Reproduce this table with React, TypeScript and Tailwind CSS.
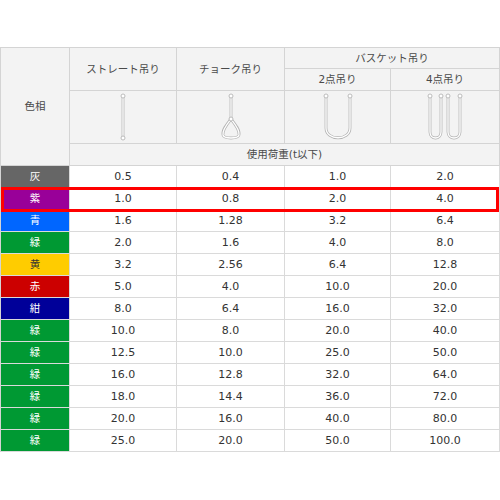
import React from "react";

type Row = { name: string; bg: string; fg: string; v: [string, string, string, string] };

const rows: Row[] = [
  { name: "灰", bg: "bg-[#666666]", fg: "text-white", v: ["0.5", "0.4", "1.0", "2.0"] },
  { name: "紫", bg: "bg-[#990099]", fg: "text-white", v: ["1.0", "0.8", "2.0", "4.0"] },
  { name: "青", bg: "bg-[#0066ff]", fg: "text-white", v: ["1.6", "1.28", "3.2", "6.4"] },
  { name: "緑", bg: "bg-[#009933]", fg: "text-white", v: ["2.0", "1.6", "4.0", "8.0"] },
  { name: "黄", bg: "bg-[#ffcc00]", fg: "text-[#333333]", v: ["3.2", "2.56", "6.4", "12.8"] },
  { name: "赤", bg: "bg-[#cc0000]", fg: "text-white", v: ["5.0", "4.0", "10.0", "20.0"] },
  { name: "紺", bg: "bg-[#000099]", fg: "text-white", v: ["8.0", "6.4", "16.0", "32.0"] },
  { name: "緑", bg: "bg-[#009933]", fg: "text-white", v: ["10.0", "8.0", "20.0", "40.0"] },
  { name: "緑", bg: "bg-[#009933]", fg: "text-white", v: ["12.5", "10.0", "25.0", "50.0"] },
  { name: "緑", bg: "bg-[#009933]", fg: "text-white", v: ["16.0", "12.8", "32.0", "64.0"] },
  { name: "緑", bg: "bg-[#009933]", fg: "text-white", v: ["18.0", "14.4", "36.0", "72.0"] },
  { name: "緑", bg: "bg-[#009933]", fg: "text-white", v: ["20.0", "16.0", "40.0", "80.0"] },
  { name: "緑", bg: "bg-[#009933]", fg: "text-white", v: ["25.0", "20.0", "50.0", "100.0"] },
];

// sling strap drawn as an outline: grey stroke with a white core
function Strap({ d }: { d: string }) {
  return (
    <>
      <path d={d} fill="none" stroke="#b4b4b4" strokeWidth={2.8} strokeLinecap="round" strokeLinejoin="round" />
      <path d={d} fill="none" stroke="#ffffff" strokeWidth={1.3} strokeLinecap="round" strokeLinejoin="round" />
    </>
  );
}

function Eye({ x, y }: { x: number; y: number }) {
  return <circle cx={x} cy={y} r={2} fill="#ffffff" stroke="#b4b4b4" strokeWidth={0.9} />;
}

function StraightIcon() {
  return (
    <svg width="12" height="50" viewBox="0 0 12 50">
      <Strap d="M6 5 L6 45" />
      <Eye x={6} y={4} />
      <Eye x={6} y={46} />
    </svg>
  );
}

function ChokeIcon() {
  return (
    <svg width="26" height="50" viewBox="0 0 26 50">
      <Strap d="M13 5 L13 27" />
      <Strap d="M13 27 C 9 32, 4 38, 5 43 C 6 47, 20 47, 21 43 C 22 38, 17 32, 13 27 Z" />
      <Eye x={13} y={4} />
      <Eye x={13} y={27} />
    </svg>
  );
}

function BasketIcon() {
  return (
    <svg width="30" height="50" viewBox="0 0 30 50">
      <Strap d="M3 5 L3 36 C 3 49, 27 49, 27 36 L27 5" />
      <Eye x={3} y={4} />
      <Eye x={27} y={4} />
    </svg>
  );
}

function FourPointIcon() {
  return (
    <svg width="36" height="50" viewBox="0 0 36 50">
      <Strap d="M3 5 L3 40 C 3 48, 14 48, 14 40 L14 5" />
      <Strap d="M21 5 L21 40 C 21 48, 33 48, 33 40 L33 5" />
      <Eye x={3} y={4} />
      <Eye x={14} y={4} />
      <Eye x={21} y={4} />
      <Eye x={33} y={4} />
    </svg>
  );
}

const head =
  "flex items-center justify-center border-r border-b border-[#d4d4d4] bg-[#f3f3f3] text-[10.5px] text-[#4a4a4a]";
const cell = "flex items-center justify-center border-r border-b border-[#dadada] bg-white";

export default function App() {
  return (
    <div
      className="relative h-[500px] w-[500px] bg-white pt-[47px] text-[11px] leading-none text-[#333333]"
      style={{ fontFamily: '"DejaVu Sans", "Noto Sans CJK JP", sans-serif' }}
    >
      <div className="w-[500px] border-l border-t border-[#d4d4d4]">
        <div className="grid grid-cols-[69px_107px_108px_106px_109px] grid-rows-[21px_22px_53px_22px]">
          <div className={`${head} row-span-4`}>色相</div>
          <div className={`${head} row-span-2`}>ストレート吊り</div>
          <div className={`${head} row-span-2`}>チョーク吊り</div>
          <div className={`${head} col-span-2`}>バスケット吊り</div>
          <div className={head}>2点吊り</div>
          <div className={head}>4点吊り</div>
          <div className={head}>
            <StraightIcon />
          </div>
          <div className={head}>
            <ChokeIcon />
          </div>
          <div className={head}>
            <BasketIcon />
          </div>
          <div className={head}>
            <FourPointIcon />
          </div>
          <div className={`${head} col-span-4`}>使用荷重(t以下)</div>
        </div>
        <div className="grid grid-cols-[69px_107px_108px_106px_109px] auto-rows-[22px]">
          {rows.map((r, i) => (
            <React.Fragment key={i}>
              <div className={`flex items-center justify-center border-r border-b border-[#dadada] text-[10.5px] ${r.bg} ${r.fg}`}>
                {r.name}
              </div>
              {r.v.map((v, j) => (
                <div key={j} className={cell}>
                  {v}
                </div>
              ))}
            </React.Fragment>
          ))}
        </div>
      </div>
      {/* highlight around the 紫 row */}
      <div className="pointer-events-none absolute left-[1px] top-[187px] h-[25px] w-[498px] border-[3px] border-[#ff0000]" />
    </div>
  );
}
